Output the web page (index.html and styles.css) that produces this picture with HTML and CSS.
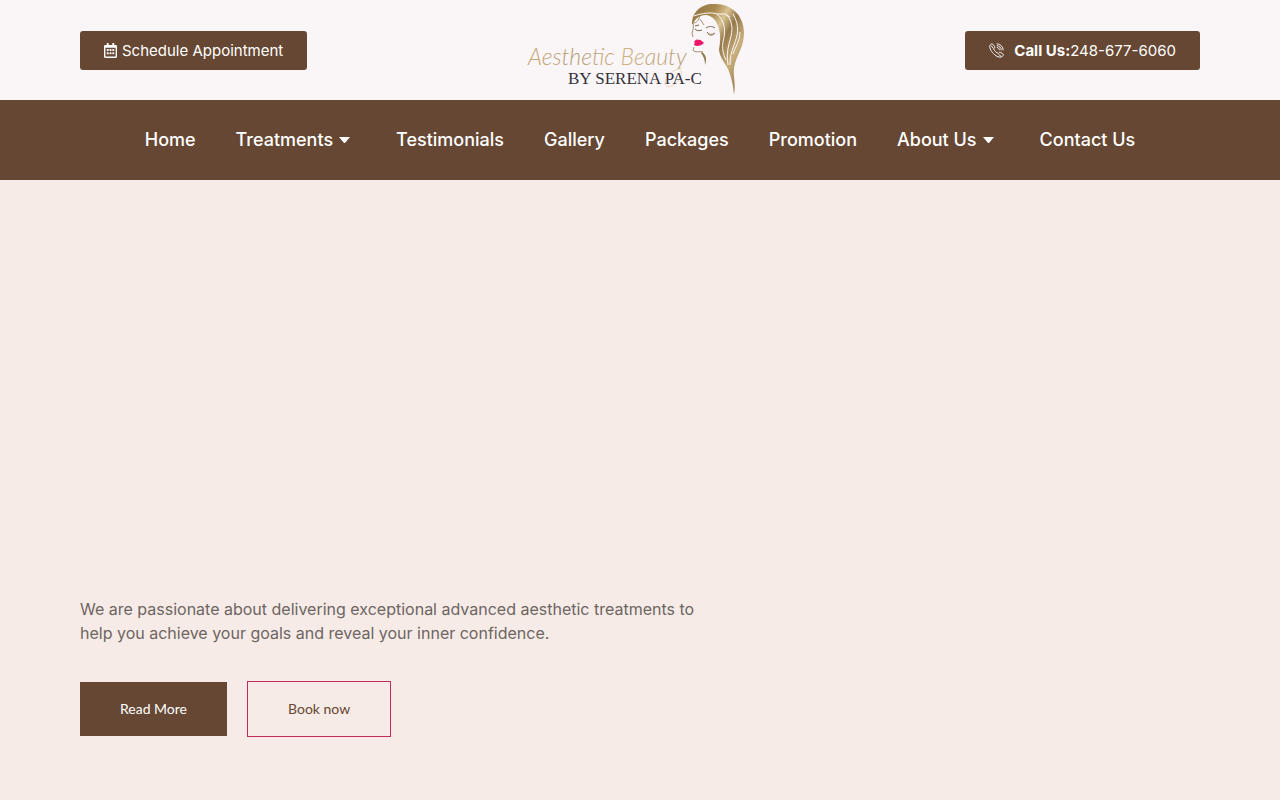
FILE: index.html
```html
<!DOCTYPE html>
<html lang="en">
<head>
    <meta charset="UTF-8">
    <meta name="viewport" content="width=device-width, initial-scale=1.0">
    <title>Aesthetic Beauty by Serena PA-C</title>
    <link rel="stylesheet" href="styles.css">
</head>
<body>
    <header class="topbar">
        <a href="#" class="top-btn">
            <svg class="icon-calendar" viewBox="0 0 448 512" aria-hidden="true">
                <path fill="currentColor" fill-rule="evenodd" d="M400 64h-48V12c0-7-5-12-12-12h-40c-7 0-12 5-12 12v52H160V12c0-7-5-12-12-12h-40c-7 0-12 5-12 12v52H48C21 64 0 86 0 112v352c0 27 21 48 48 48h352c27 0 48-21 48-48V112c0-26-21-48-48-48zm-6 400H54c-3 0-6-3-6-6V160h352v298c0 3-3 6-6 6z"/>
                <path fill="currentColor" d="M96 208h64v64H96zM192 208h64v64h-64zM288 208h64v64h-64zM96 320h64v64H96zM192 320h64v64h-64zM288 320h64v64h-64z"/>
            </svg>
            <span>Schedule Appointment</span>
        </a>
        <a href="#" class="logo" aria-label="Aesthetic Beauty by Serena PA-C">
            <svg viewBox="0 0 240 100">
                <defs>
                    <linearGradient id="hair" x1="0" y1="0" x2="1" y2="1">
                        <stop offset="0" stop-color="#8d7142"/>
                        <stop offset="0.25" stop-color="#a88a50"/>
                        <stop offset="0.38" stop-color="#d9c492"/>
                        <stop offset="0.5" stop-color="#94784a"/>
                        <stop offset="0.68" stop-color="#c9b07c"/>
                        <stop offset="1" stop-color="#80633a"/>
                    </linearGradient>
                    <linearGradient id="gold" x1="0" y1="0" x2="1" y2="0">
                        <stop offset="0" stop-color="#c8a777"/>
                        <stop offset="0.3" stop-color="#b39b74"/>
                        <stop offset="0.6" stop-color="#d0b283"/>
                        <stop offset="1" stop-color="#b59a70"/>
                    </linearGradient>
                </defs>
                <path fill="none" stroke="#f0d9bd" d="M162 68c-9 1-17 9-17 15 0 5 7 5 12-1 5-5 6-11 2-13"/>
                <text class="logo-name" x="8" y="65" fill="url(#gold)">Aesthetic Beauty</text>
                <text class="logo-by" x="48" y="84">BY SERENA PA-C</text>
                <path fill="url(#hair)" d="M172 24C172 12 181 4 193 4c18-1 31 11 31 29 0 15-8 22-10 35-1 8 2 15 0 27-1-11-3-19-6-26-3-6-8-11-9-19 1-7 2-14 0-21-2-8-6-13-13-14-7 0-11 4-13 9z"/>
                <path fill="none" stroke="#fbf6f7" stroke-width="1" d="M174 16c8-3 18-4 23-2h8l5 3M197 14c8 7 9 17 6 28-1 6 0 12 3 18M206 14c9 10 6 19 3 30-2 7-2 14-1 21M213 14c7 12 5 21 1 31-3 8-4 13-4 20M220 32c0 9-5 15-7 22"/>
                <path fill="none" stroke="#8e764d" stroke-width="0.8" d="M173 23c1 4 0 7-1 10l1 4M174 47l-1 3c2 3 6 1 10 2M174 23c4-1 5-4 6-8M180 19l4 6"/>
                <path fill="#8e764d" d="M182 52c4 3 5 7 3 13 0-5-1-8-4-12z"/>
                <path fill="none" stroke="#796347" stroke-width="1" d="M175 29c2 2 4 2 7 1M187 32c2 3 5 3 8 1M186 28c3-2 6-2 9 0M175 26l4-1"/>
                <path fill="#aa8d6a" d="M187 33c3 2 5 2 8 0-1 3-6 4-8 0z"/>
                <path fill="#ed1769" d="M174 42c1-2 3-3 4-2 2-1 4 1 6 3-2 2-4 3-7 3-2 0-3-1-3-2l1-1z"/>
            </svg>
        </a>
        <a href="tel:248-677-6060" class="top-btn call-btn">
            <svg class="icon-phone" viewBox="0 0 16 16" fill="none" stroke="currentColor" aria-hidden="true">
                <path d="M2.2 1.3.9 2.6C.2 6 3.200 10 5.600 12.100c2.600 2.400 5.500 3.700 8 2.700l1.500-1.500c.4-.5.300-1-.1-1.400l-2.600-1.900c-.5-.4-1-.3-1.400.1l-1 1C8 10.500 5.900 8.500 4.900 6.200l1-1c.4-.4.4-.9.100-1.400L4.100 1.400c-.5-.6-1.300-.7-1.900-.1z"/>
                <path d="m2.300 2.800 2.300 3M10.300 12.200l2.700 2M8.300.8c3.800.2 6.700 3.100 6.900 6.900M8.300 2.800c2.700.2 4.700 2.200 4.900 4.900M8.300 4.800c1.700.2 2.700 1.200 2.900 2.900"/>
            </svg>
            <span><strong>Call Us:</strong>248-677-6060</span>
        </a>
    </header>

    <nav class="menu">
        <a href="#">Home</a>
        <a href="#" class="has-sub">Treatments</a>
        <a href="#">Testimonials</a>
        <a href="#">Gallery</a>
        <a href="#">Packages</a>
        <a href="#">Promotion</a>
        <a href="#" class="has-sub">About Us</a>
        <a href="#">Contact Us</a>
    </nav>

    <main class="hero">
        <p>We are passionate about delivering exceptional advanced aesthetic treatments to help you achieve your goals and reveal your inner confidence.</p>
        <div class="hero-buttons">
            <a href="#" class="btn">Read More</a>
            <a href="#" class="btn btn-outline">Book now</a>
        </div>
    </main>
</body>
</html>
```
FILE: styles.css
```css
* {
    box-sizing: border-box;
}
body {
    margin: 0;
    min-height: 100vh;
    display: flex;
    flex-direction: column;
    font-family: Inter, sans-serif;
    background-color: #f6ebe6;
}
a {
    text-decoration: none;
}
.topbar {
    display: grid;
    grid-template-columns: 1fr auto 1fr;
    align-items: center;
    padding: 0 80px;
    background-color: #faf6f8;
}
.top-btn {
    display: flex;
    align-items: center;
    justify-self: start;
    gap: 5px;
    padding: 12px 24px;
    border-radius: 3px;
    background-color: #664733;
    color: #fff;
    font-size: 15px;
    line-height: 15px;
}
.call-btn {
    justify-self: end;
    gap: 10px;
}
.icon-calendar {
    width: 13px;
    height: 15px;
}
.icon-phone {
    width: 15px;
    height: 15px;
}
.logo svg {
    display: block;
    width: 240px;
    height: 100px;
}
.logo-name {
    font-family: Lato, sans-serif;
    font-size: 23px;
    font-style: italic;
    font-weight: 300;
}
.logo-by {
    font-family: "Liberation Serif", serif;
    font-size: 17px;
    fill: #35313a;
}
.menu {
    display: flex;
    flex-wrap: wrap;
    justify-content: center;
    background-color: #664733;
}
.menu a {
    display: flex;
    align-items: center;
    padding: 0 20px;
    color: #fff;
    font-size: 18px;
    font-weight: 500;
    line-height: 80px;
}
.has-sub::after {
    content: "";
    width: 1px;
    margin: 0 6px;
    border: solid transparent;
    border-width: 6px 5px 0;
    border-top-color: #fff;
}
.hero {
    flex: 1;
    display: flex;
    flex-direction: column;
    justify-content: flex-end;
    gap: 36px;
    padding: 60px 80px 63px;
}
.hero p {
    max-width: 640px;
    margin: 0;
    color: #6d6562;
    font-size: 16px;
    line-height: 24px;
}
.hero-buttons {
    display: flex;
    align-items: center;
    gap: 20px;
}
.btn {
    padding: 20px 40px;
    background-color: #664733;
    color: #fff;
    font-family: Lato, sans-serif;
    font-size: 14px;
    line-height: 14px;
}
.btn-outline {
    border: 1px solid #c12c5b;
    background-color: transparent;
    color: #664733;
}
```
